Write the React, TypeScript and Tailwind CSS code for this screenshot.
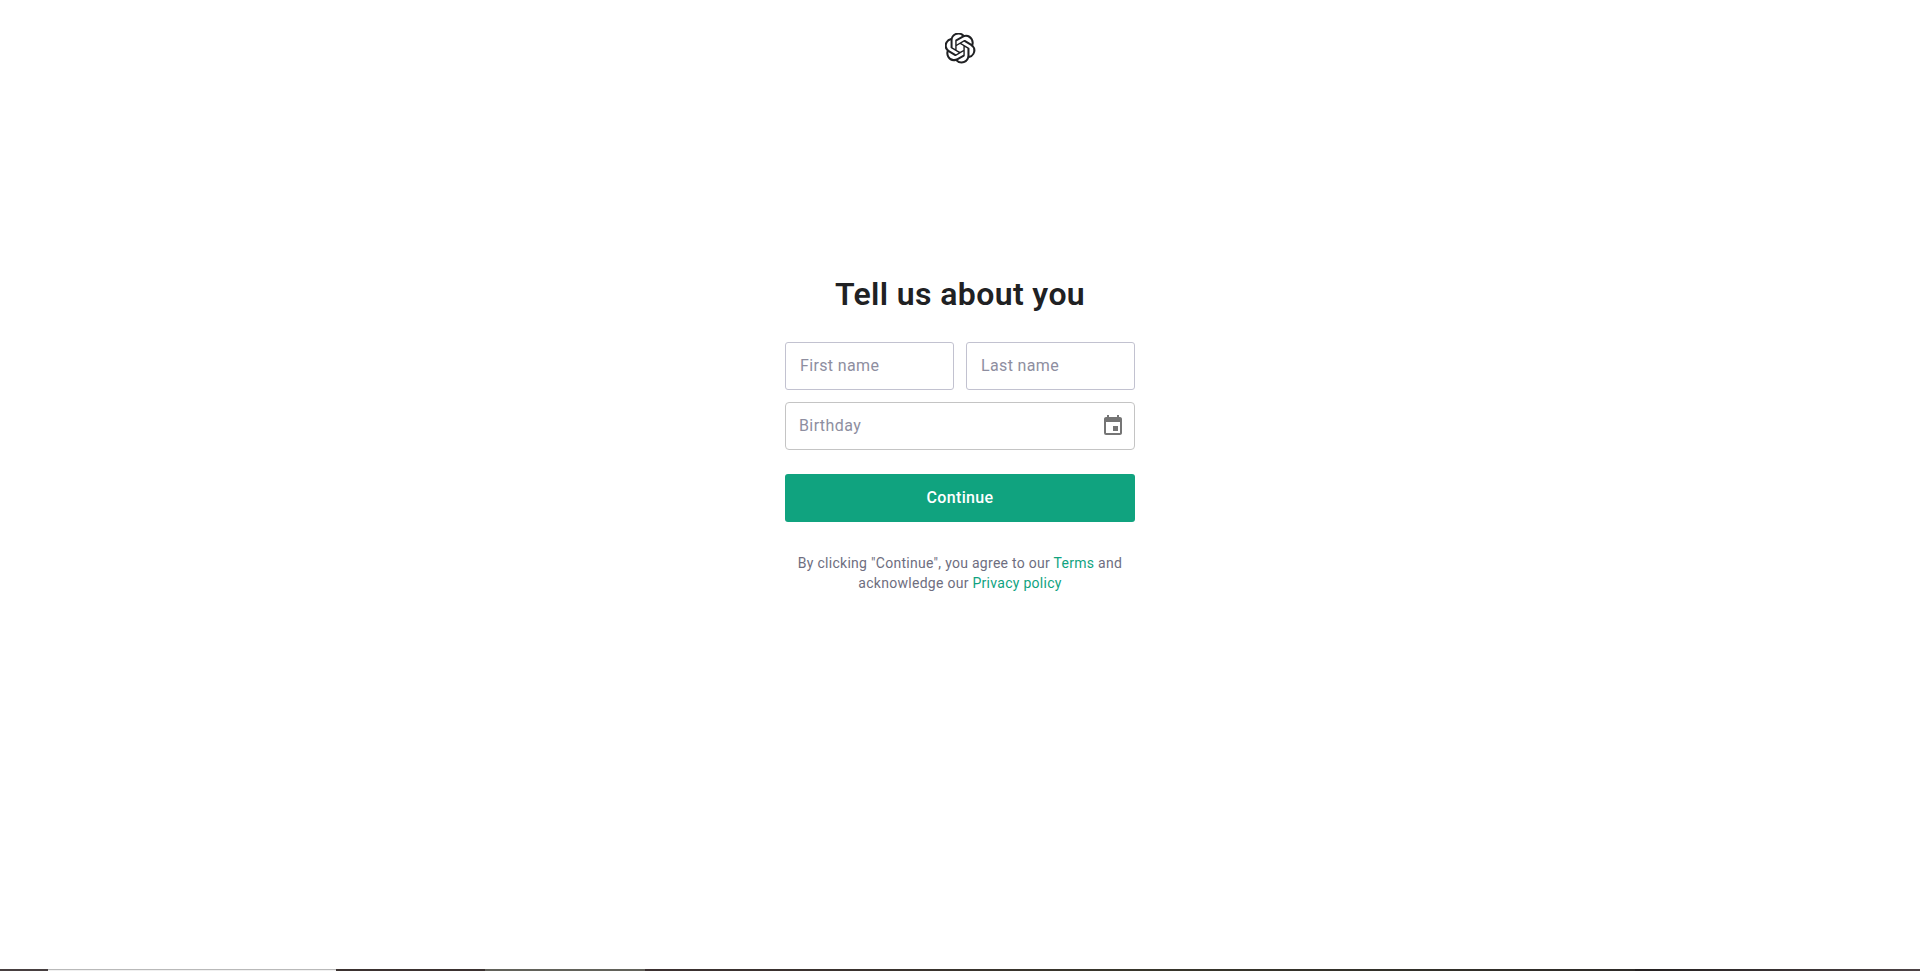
import { MdEvent } from 'react-icons/md';
import { SiOpenai } from 'react-icons/si';

function NameField({ placeholder }: { placeholder: string }) {
  return (
    <input
      type="text"
      placeholder={placeholder}
      className="h-12 w-full min-w-0 rounded-[3px] border border-[#c2c2d0] bg-white px-3.5 pb-0.5 text-base tracking-[0.36px] text-[#202123] outline-none placeholder:text-[#8e8ea0]"
    />
  );
}

function TaskbarEdge() {
  return (
    <div className="flex h-0.5 w-full flex-shrink-0">
      <div className="w-12 bg-[#473f40]" />
      <div className="w-72 border-t border-[#b9b9b9] bg-[#f0f0f0]" />
      <div className="w-[149px] bg-[#3b3230]" />
      <div className="w-40 bg-[#62625a]" />
      <div className="flex-1 bg-gradient-to-r from-[#3b3030] via-[#38362b] to-[#2e2b28]" />
      <div className="w-[285px] bg-gradient-to-r from-[#242020] to-[#4d4345]" />
    </div>
  );
}

export default function App() {
  return (
    <div className="flex h-screen flex-col overflow-hidden bg-white font-['Roboto','Liberation_Sans',sans-serif]">
      <header className="flex justify-center pt-8">
        <SiOpenai className="h-8 w-8 p-[0.5px] text-[#202123]" />
      </header>

      <main className="mx-auto w-[350px] flex-1 pt-[210px]">
        <h1 className="mb-7 text-center text-[32px] leading-10 font-semibold tracking-[0.38px] text-[#202123]">
          Tell us about you
        </h1>

        <form>
          <div className="grid grid-cols-2 gap-3">
            <NameField placeholder="First name" />
            <NameField placeholder="Last name" />
          </div>

          <div className="mt-3 flex h-12 items-center rounded border border-[#c4c4c4] pr-[9px] pl-[13px]">
            <input
              type="text"
              placeholder="Birthday"
              className="min-w-0 flex-1 bg-transparent text-base tracking-[0.4px] text-[#202123] outline-none placeholder:text-[#8e8ea0]"
            />
            <button type="button" aria-label="Choose date" className="text-[#757575]">
              <MdEvent className="h-6 w-6" />
            </button>
          </div>

          <button
            type="button"
            className="mt-6 h-12 w-full rounded-[3px] bg-[#10a37f] text-base font-medium tracking-[0.36px] text-white"
          >
            Continue
          </button>
        </form>

        <p className="mt-[31px] text-center text-sm tracking-[0.28px] text-[#6e6e80]">
          By clicking "Continue", you agree to our{' '}
          <a href="#" className="text-[#10a37f]">
            Terms
          </a>{' '}
          and
          <br />
          acknowledge our{' '}
          <a href="#" className="text-[#10a37f]">
            Privacy policy
          </a>
        </p>
      </main>

      <TaskbarEdge />
    </div>
  );
}
